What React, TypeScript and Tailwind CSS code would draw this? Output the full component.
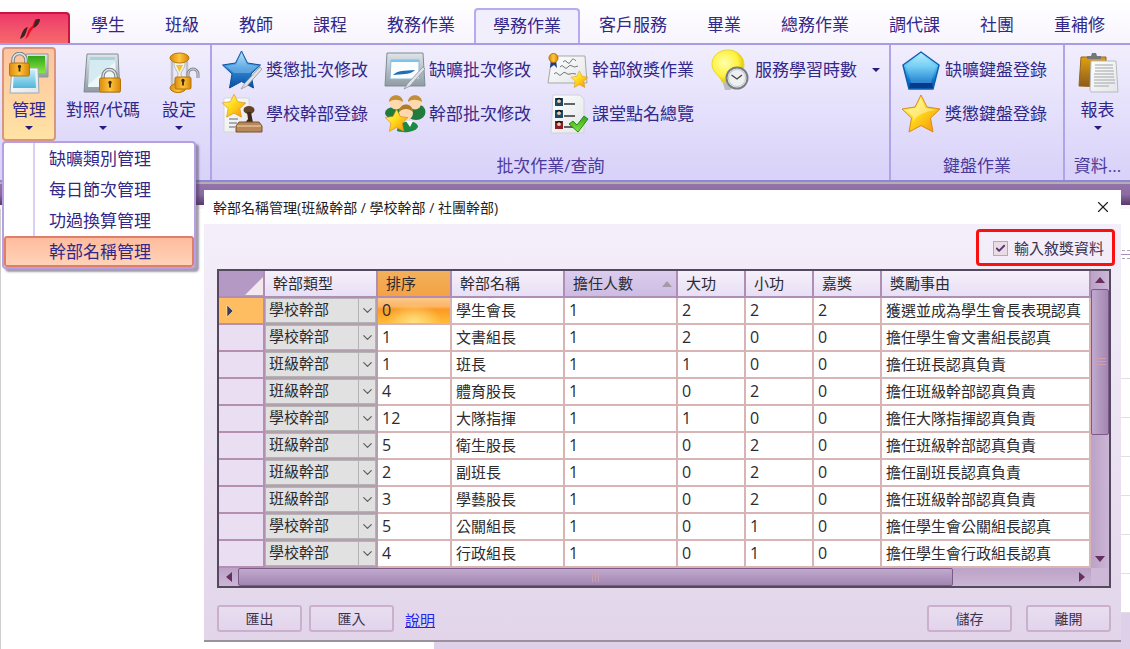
import { useState } from 'react';
import type { ReactNode } from 'react';
import clsx from 'clsx';
import { Check, ChevronDown, X } from 'lucide-react';

const STAR = 'M21 2 L27 14 L40 16 L30.5 25 L33 39 L21 32.5 L9 39 L11.5 25 L2 16 L15 14 Z';

const tabs = ['學生', '班級', '教師', '課程', '教務作業', '學務作業', '客戶服務', '畢業', '總務作業', '調代課', '社團', '重補修'];

const menuItems = ['缺曠類別管理', '每日節次管理', '功過換算管理', '幹部名稱管理'];

const columns = [
  { label: '幹部類型', width: 'w-[113px]' },
  { label: '排序', width: 'w-[74px]' },
  { label: '幹部名稱', width: 'w-[113px]' },
  { label: '擔任人數', width: 'w-[113px]' },
  { label: '大功', width: 'w-[68px]' },
  { label: '小功', width: 'w-[68px]' },
  { label: '嘉獎', width: 'w-[68px]' },
  { label: '獎勵事由', width: '' },
];

const rows = [
  { type: '學校幹部', values: ['0', '學生會長', '1', '2', '2', '2', '獲選並成為學生會長表現認真'] },
  { type: '學校幹部', values: ['1', '文書組長', '1', '2', '0', '0', '擔任學生會文書組長認真'] },
  { type: '班級幹部', values: ['1', '班長', '1', '1', '0', '0', '擔任班長認真負責'] },
  { type: '班級幹部', values: ['4', '體育股長', '1', '0', '2', '0', '擔任班級幹部認真負責'] },
  { type: '學校幹部', values: ['12', '大隊指揮', '1', '1', '0', '0', '擔任大隊指揮認真負責'] },
  { type: '班級幹部', values: ['5', '衛生股長', '1', '0', '2', '0', '擔任班級幹部認真負責'] },
  { type: '班級幹部', values: ['2', '副班長', '1', '0', '2', '0', '擔任副班長認真負責'] },
  { type: '班級幹部', values: ['3', '學藝股長', '1', '0', '2', '0', '擔任班級幹部認真負責'] },
  { type: '學校幹部', values: ['5', '公關組長', '1', '0', '1', '0', '擔任學生會公關組長認真'] },
  { type: '學校幹部', values: ['4', '行政組長', '1', '0', '1', '0', '擔任學生會行政組長認真'] },
];

// Gradients shared by all ribbon icons
const IconDefs = () => (
  <svg className="absolute h-0 w-0" aria-hidden="true">
    <defs>
      <linearGradient id="gold" x1="0" y1="0" x2="1" y2="1">
        <stop offset="0" stopColor="#fff59a" />
        <stop offset="0.45" stopColor="#ffdd1c" />
        <stop offset="1" stopColor="#f58a0a" />
      </linearGradient>
      <linearGradient id="lock" x1="0" y1="0" x2="1" y2="0">
        <stop offset="0" stopColor="#d98c10" />
        <stop offset="0.5" stopColor="#ffc53c" />
        <stop offset="1" stopColor="#d58608" />
      </linearGradient>
      <linearGradient id="blue" x1="0" y1="0" x2="0" y2="1">
        <stop offset="0" stopColor="#a9e0fb" />
        <stop offset="0.45" stopColor="#2f8fdc" />
        <stop offset="1" stopColor="#0a4c9e" />
      </linearGradient>
      <linearGradient id="gem" x1="0" y1="0" x2="0" y2="1">
        <stop offset="0" stopColor="#b6f0ff" />
        <stop offset="0.4" stopColor="#5cc4f0" />
        <stop offset="0.75" stopColor="#0a78d0" />
        <stop offset="1" stopColor="#0a4fa8" />
      </linearGradient>
      <linearGradient id="sky" x1="0" y1="0" x2="0" y2="1">
        <stop offset="0" stopColor="#c9eef8" />
        <stop offset="1" stopColor="#4fb6dc" />
      </linearGradient>
      <linearGradient id="green" x1="0" y1="0" x2="0" y2="1">
        <stop offset="0" stopColor="#2fa51c" />
        <stop offset="1" stopColor="#8ae63c" />
      </linearGradient>
      <linearGradient id="steel" x1="0" y1="0" x2="0" y2="1">
        <stop offset="0" stopColor="#dfe5e9" />
        <stop offset="1" stopColor="#8f9aa3" />
      </linearGradient>
      <linearGradient id="paper" x1="0" y1="0" x2="1" y2="1">
        <stop offset="0" stopColor="#ffffff" />
        <stop offset="1" stopColor="#e2e5e8" />
      </linearGradient>
      <linearGradient id="wood" x1="0" y1="0" x2="0" y2="1">
        <stop offset="0" stopColor="#e0a010" />
        <stop offset="1" stopColor="#8a5a1c" />
      </linearGradient>
      <radialGradient id="bulb" cx="0.4" cy="0.4" r="0.6">
        <stop offset="0" stopColor="#ffffb0" />
        <stop offset="0.7" stopColor="#fff23a" />
        <stop offset="1" stopColor="#e0c60a" />
      </radialGradient>
    </defs>
  </svg>
);

const Icon = ({ children }: { children: ReactNode }) => (
  <svg viewBox="0 0 42 42" className="size-[42px] shrink-0" fill="none" aria-hidden="true">
    {children}
  </svg>
);

const Star = ({ transform, fill = 'url(#gold)', stroke = '#d98a12' }: { transform?: string; fill?: string; stroke?: string }) => (
  <path d={STAR} transform={transform} fill={fill} stroke={stroke} strokeWidth="1" strokeLinejoin="round" />
);

const Keyhole = ({ x, y }: { x: number; y: number }) => (
  <path d={`M${x} ${y} m-1.6 -1 a1.7 1.7 0 1 1 3.2 0 l-0.7 1.3 v3.2 h-1.8 v-3.2 z`} fill="#3f2604" />
);

const ManageIcon = () => (
  <Icon>
    <path d="M18 2 H40 V25 H22 L18 22 Z" fill="url(#steel)" stroke="#8b979c" />
    <path d="M20 4 H37 V21 H20 Z" fill="url(#green)" />
    <path d="M4 16 H30 L31 41 H2 Z" fill="url(#paper)" stroke="#9ba9b2" />
    <path d="M6 18 H27 L28 36 H5 Z" fill="url(#sky)" />
    <path d="M5 13 V8 a6.500 6.500 0 0 1 13 0 V13" stroke="#7d8388" strokeWidth="3.600" />
    <path d="M5 13 V8 a6.500 6.500 0 0 1 13 0 V13" stroke="#dfe3e6" strokeWidth="1.500" />
    <rect x="1.500" y="11" width="20" height="13" rx="1.500" fill="url(#lock)" stroke="#b87408" />
    <Keyhole x={11.5} y={16} />
  </Icon>
);

const CodeIcon = () => (
  <Icon>
    <path d="M5 2 H36 L38 40 H2 Z" fill="url(#steel)" stroke="#828d95" />
    <path d="M8 5 H33 L35 35 H6 Z" fill="#d5ebf1" />
    <path d="M8 5 H33 V8 H8 Z" fill="#a9d2df" />
    <path d="M7 32 L33 10 L34 35 H6 Z" fill="#edf6f8" />
    <path d="M21 27 V24 a6 6 0 0 1 13 0 V27" stroke="#7d8388" strokeWidth="3.500" />
    <path d="M21 27 V24 a6 6 0 0 1 13 0 V27" stroke="#dfe3e6" strokeWidth="1.400" />
    <rect x="17.500" y="26" width="21" height="14" rx="1.500" fill="url(#lock)" stroke="#b87408" />
    <Keyhole x={28} y={32} />
  </Icon>
);

const SettingIcon = () => (
  <Icon>
    <path d="M14 9 V34 M29 9 V34" stroke="#bcc0c8" strokeWidth="2.500" />
    <path d="M16 10 H27 C27 18 23 19 23 22 C23 25 27 27 27 35 H16 C16 27 20 25 20 22 C20 19 16 18 16 10 Z" fill="#f5f2df" stroke="#b9b9c2" />
    <path d="M18 13 H25 L21.500 20 Z" fill="#eec136" />
    <ellipse cx="21.500" cy="6" rx="9.500" ry="5" fill="url(#lock)" stroke="#b87408" />
    <ellipse cx="20" cy="36" rx="8" ry="4.500" fill="url(#lock)" stroke="#b87408" />
    <path d="M30 28 V22 a5 5 0 0 1 10 0 V26" stroke="#81868d" strokeWidth="3" />
    <path d="M30 28 V22 a5 5 0 0 1 10 0 V26" stroke="#d9dce0" strokeWidth="1" />
    <rect x="17" y="25" width="16" height="12" rx="1.500" fill="url(#lock)" stroke="#b87408" />
    <Keyhole x={25} y={30} />
  </Icon>
);

const Pen = () => (
  <path d="M39 18 L24 34 L20 40 L26 37 L41 20 Z" fill="#dfe2e6" stroke="#8d949c" strokeWidth="0.800" />
);

const RewardIcon = () => (
  <Icon>
    <Star fill="url(#blue)" stroke="#0d4f9c" transform="translate(-0.5 0)" />
    <path d="M20.500 5 L26 15.500 L37 17 L29 24 L13 24 L5 17 L15 15.500 Z" fill="#ffffff" opacity="0.25" />
    <Pen />
  </Icon>
);

const OfficerIcon = () => (
  <Icon>
    <path d="M3 5 H28 L29 39 H3 Z" fill="url(#paper)" stroke="#d5d5d8" />
    <path d="M8 26 h9 M8 30 h8 M8 34 h6" stroke="#666" strokeWidth="1" />
    <Star transform="translate(0 0) scale(0.620)" />
    <ellipse cx="28" cy="17" rx="5.500" ry="4" fill="#634225" />
    <path d="M26 19 H30 L32 30 H24 L27 26 Z" fill="#3f2815" />
    <path d="M18 29 H38 L41 33 V39 H15 V33 Z" fill="#b98858" stroke="#765033" />
    <path d="M16 33 H40" stroke="#e4bd93" strokeWidth="1.500" />
  </Icon>
);

const AbsenceIcon = () => (
  <Icon>
    <path d="M3 4 H39 L41 37 H1 Z" fill="url(#steel)" stroke="#7f8d96" />
    <path d="M7 11 H35 V30 H6 Z" fill="#fcfdff" stroke="#8fb9d1" />
    <path d="M7 12 H35" stroke="#7cc3ef" strokeWidth="2" />
    <path d="M9 26 C14 21 20 22 31 21 C27 26 17 25 9 26 Z" fill="#1f6fb5" />
    <Pen />
  </Icon>
);

const GroupIcon = () => (
  <Icon>
    <ellipse cx="10" cy="20" rx="9" ry="6" fill="#217a3e" />
    <ellipse cx="32" cy="19" rx="9.500" ry="8" fill="#217a3e" />
    <circle cx="12" cy="10" r="6.500" fill="#ffd9ae" />
    <path d="M5 9 C5 0 19 0 19 9 C14 6 9 6 5 9 Z" fill="#c28f38" />
    <circle cx="31" cy="10" r="6.500" fill="#ffd9ae" />
    <path d="M24 9 C24 0 38 0 38 9 C33 6 28 6 24 9 Z" fill="#c28f38" />
    <path d="M13 38 C13 26 34 26 34 34 C31 40 17 40 13 38 Z" fill="#1c8a42" />
    <circle cx="22" cy="20" r="7" fill="#ffd9ae" />
    <path d="M15 19 C15 9 29 9 29 19 C25 15 19 15 15 19 Z" fill="#b07c2c" />
    <path d="M22 28 l4 6 l3 -6 z" fill="#fff" />
    <Star transform="translate(0 15) scale(0.600)" />
  </Icon>
);

const CertificateIcon = () => (
  <Icon>
    <path d="M5 7 H38 L40 34 H1 Z" fill="url(#paper)" stroke="#a6a9a2" />
    <path d="M16 13 q2 -3 4 0 t4 -1 t5 0 M13 18 q2 -3 4 0 t4 0 t4 -1 t6 0 M7 25 q2 -3 4 0 t4 0 t4 -1 t4 1 t6 0" stroke="#777" strokeWidth="1" />
    <path d="M4 11 L3 19 L7 16 L10 19 L9 11 Z" fill="#1d3f8f" />
    <circle cx="6.500" cy="9" r="4.500" fill="url(#lock)" stroke="#b87408" />
    <Star transform="translate(23 21) scale(0.450)" />
  </Icon>
);

const RollCallIcon = () => (
  <Icon>
    <path d="M6 2 H33 L37 6 V40 H4 Z" fill="url(#paper)" stroke="#cfd2d6" />
    {[5, 17, 28].map((y, i) => (
      <g key={y}>
        <rect x="8" y={y} width="8" height="8" fill={i === 2 ? '#8c1c26' : '#174a6d'} />
        <circle cx="12" cy={y + 3} r="2" fill="#f2cda8" />
        <path d={`M9.500 ${y + 2} q2.500 -3 5 0`} stroke="#111" strokeWidth="1.500" />
        <path d={`M17 ${y + 6} h11`} stroke="#333" strokeWidth="1.500" />
      </g>
    ))}
    <path d="M22 31 L26 28 L30 32 L37 23 L41 26 L31 39 Z" fill="url(#green)" stroke="#218c18" />
  </Icon>
);

const ServiceIcon = () => (
  <Icon>
    <path d="M12 31 H24 V38 L20 41 H15 Z" fill="#b9bdc2" />
    <path d="M18 1 C28 1 34 8 34 16 C34 24 27 27 26 33 H12 C11 27 2 24 2 15 C2 7 9 1 18 1 Z" fill="url(#bulb)" stroke="#e7d535" />
    <circle cx="27" cy="29" r="10.500" fill="#eef0f1" stroke="#777e83" strokeWidth="2" />
    <circle cx="27" cy="29" r="8.500" stroke="#c2c7ca" />
    <path d="M21.500 26 L27 30 L32 26" stroke="#444" strokeWidth="1.300" />
  </Icon>
);

const PentagonIcon = () => (
  <Icon>
    <path d="M21 3 L39 16 L33 40 H9 L3 16 Z" fill="url(#gem)" stroke="#0e5fae" strokeWidth="1.500" strokeLinejoin="round" />
    <path d="M21 6 L36 17 L31 34 H11 L6 17 Z" fill="#d8f6ff" opacity="0.2" />
    <path d="M10 34 H32 L33 39 H9 Z" fill="#063a8c" />
  </Icon>
);

const StarIcon = () => (
  <Icon>
    <Star />
    <path d="M20.500 5 L25.500 15 L36 17 C26 18 16 22 13 29 L13.500 24 L6 17 L16 15 Z" fill="#ffffff" opacity="0.4" />
  </Icon>
);

const ReportIcon = () => (
  <Icon>
    <path d="M4 5 H29 V35 L2 34 Z" fill="url(#wood)" stroke="#95641a" />
    <path d="M10 7 V4 H14 L15 1 H19 L20 4 H24 V7 Z" fill="#777" />
    <path d="M14 9 H39 L41 40 H14 L13 38 Z" fill="url(#paper)" stroke="#b7babd" />
    <path d="M18 13 H36 M18 16 H36 M18 19 H37 M17 22 H37 M17 25 H37 M17 28 H38 M17 31 H38 M17 34 H32" stroke="#a4a4a4" />
  </Icon>
);

const Caret = ({ className }: { className?: string }) => (
  <svg viewBox="0 0 8 4" className={clsx('h-1 w-2', className)} aria-hidden="true">
    <path d="M0 0 H8 L4 4 Z" fill="#241a80" />
  </svg>
);

const LargeButton = ({ icon, label, className }: { icon: ReactNode; label: string; className?: string }) => (
  <button type="button" className={clsx('flex h-[94px] flex-col items-center rounded-[4px] border-2 pt-[3px]', className)}>
    {icon}
    <span className="mt-1 whitespace-nowrap leading-6">{label}</span>
    <Caret className="mt-1" />
  </button>
);

const SmallButton = ({ icon, label, menu }: { icon: ReactNode; label: string; menu?: boolean }) => (
  <button type="button" className="flex h-11 items-center gap-[3px] whitespace-nowrap">
    {icon}
    <span>{label}</span>
    {menu && <Caret className="ml-3" />}
  </button>
);

const RibbonGroup = ({ label, className, children }: { label?: string; className?: string; children: ReactNode }) => (
  <section className={clsx('flex flex-col justify-between border-[#b0a3e6]', className)}>
    {children}
    <div className="h-[26px] truncate text-center leading-6 text-[#4a3a9c]">{label}</div>
  </section>
);

const DropMenu = () => (
  <ul className="absolute left-[2px] top-[96px] z-20 w-[194px] rounded-[4px] border-2 border-[#b79fe2] bg-white bg-[linear-gradient(to_right,transparent_29px,#dccff5_29px,#dccff5_31px,transparent_31px)] shadow-[3px_3px_2px_rgba(70,60,90,0.5)]">
    {menuItems.map((item) => (
      <li key={item}>
        <button
          type="button"
          className={clsx(
            'block h-[31px] w-full rounded-[3px] border-2 pl-[43px] text-left leading-[26px]',
            item === '幹部名稱管理' ? 'border-[#de7f6c] bg-linear-to-b from-[#ffbc9e] to-[#ffd3b8]' : 'border-transparent',
          )}
        >
          {item}
        </button>
      </li>
    ))}
  </ul>
);

const Ribbon = () => (
  <header className="text-[17px] text-[#322889]">
    <nav className="flex h-[45px] items-end overflow-hidden border-b-2 border-[#a99ce6] bg-linear-to-b from-white to-[#f8f5fd]">
      <button type="button" aria-label="系統選單" className="mr-px flex h-[31px] w-[70px] items-center justify-center rounded-tr-[4px] border-t-2 border-r-2 border-[#c9163c] bg-linear-to-b from-[#ef386a] to-[#f5686c]">
        <svg viewBox="0 0 22 22" className="mr-2 size-[22px]" fill="none" aria-hidden="true">
          <path d="M1 21 C3 15 4 10 9 9 C7 13 7 18 3 20 Z" fill="#3b2226" />
          <path d="M6 21 C9 16 8 12 12 9 C15 7 14 3 17 1 C18 6 15 10 12 13 C10 16 10 19 6 21 Z" fill="#e60d20" />
          <path d="M14 10 C16 7 15 3 18 1 L21 1 C21 5 18 9 14 10 Z" fill="#3b2226" />
        </svg>
      </button>
      {tabs.map((tab) => (
        <a
          key={tab}
          href="#"
          className={clsx(
            'shrink-0 whitespace-nowrap',
            tab === '學務作業'
              ? '-mx-px -mb-[2px] h-[37px] rounded-t-[4px] border-2 border-b-0 border-[#b7aaf0] bg-[#f2effd] px-[17px] leading-[32px]'
              : 'h-[35px] px-5 leading-[34px]',
          )}
        >
          {tab}
        </a>
      ))}
    </nav>

    <div className="relative flex h-[137px] border-b-2 border-[#9185cf] bg-linear-to-b from-[#f1eefd] to-[#d8d1f9]">
      <RibbonGroup className="w-[212px] shrink-0 border-r-2">
        <div className="flex gap-[5px] pl-[2px] pt-[2px]">
          <LargeButton icon={<ManageIcon />} label="管理" className="w-[54px] border-[#d9967e] bg-linear-to-b from-[#fdc4a0] to-[#ffe3a4]" />
          <LargeButton icon={<CodeIcon />} label="對照/代碼" className="w-[84px] border-transparent" />
          <LargeButton icon={<SettingIcon />} label="設定" className="w-[58px] border-transparent" />
        </div>
      </RibbonGroup>
      <RibbonGroup label="批次作業/查詢" className="flex-1 border-r-2">
        <div className="grid grid-flow-col grid-cols-[163px_163px_163px_auto] grid-rows-[44px_44px] pl-[9px] pt-[3px]">
          <SmallButton icon={<RewardIcon />} label="獎懲批次修改" />
          <SmallButton icon={<OfficerIcon />} label="學校幹部登錄" />
          <SmallButton icon={<AbsenceIcon />} label="缺曠批次修改" />
          <SmallButton icon={<GroupIcon />} label="幹部批次修改" />
          <SmallButton icon={<CertificateIcon />} label="幹部敘獎作業" />
          <SmallButton icon={<RollCallIcon />} label="課堂點名總覽" />
          <SmallButton icon={<ServiceIcon />} label="服務學習時數" menu />
        </div>
      </RibbonGroup>
      <RibbonGroup label="鍵盤作業" className="w-[174px] shrink-0 border-r-2">
        <div className="flex flex-col pl-[9px] pt-[3px]">
          <SmallButton icon={<PentagonIcon />} label="缺曠鍵盤登錄" />
          <SmallButton icon={<StarIcon />} label="獎懲鍵盤登錄" />
        </div>
      </RibbonGroup>
      <RibbonGroup label="資料..." className="w-[65px] shrink-0">
        <div className="flex justify-center pt-[2px]">
          <LargeButton icon={<ReportIcon />} label="報表" className="w-[58px] border-transparent" />
        </div>
      </RibbonGroup>
      <DropMenu />
    </div>
  </header>
);

const headCell = 'border-b-2 border-r-2 border-[#b08db4] pl-2 text-left font-normal';

const RosterTable = () => (
  <table className="w-full min-w-0 flex-1 table-fixed border-separate border-spacing-0 bg-white">
    <colgroup>
      <col className="w-[46px]" />
      {columns.map((column) => (
        <col key={column.label} className={column.width} />
      ))}
    </colgroup>
    <thead>
      <tr className="h-[27px]">
        <th aria-label="選取" className="border-b-2 border-r-2 border-[#b08db4] bg-[#b399c3] p-0">
          <svg viewBox="0 0 18 18" className="ml-auto mt-1 size-[18px]" aria-hidden="true">
            <path d="M18 0 V18 H0 Z" fill="#f3e8ee" />
          </svg>
        </th>
        {columns.map(({ label }) => (
          <th
            key={label}
            className={clsx(
              headCell,
              label === '排序' && 'bg-linear-to-b from-[#f1b05c] to-[#f5a242]',
              label === '擔任人數' && 'bg-linear-to-b from-[#dccdee] to-[#ccbce2]',
              label !== '排序' && label !== '擔任人數' && 'bg-linear-to-b from-[#f5f0fa] to-[#e8dff5]',
            )}
          >
            <div className="flex items-center justify-between pr-1">
              {label}
              {label === '擔任人數' && (
                <svg viewBox="0 0 10 6" className="h-[6px] w-[10px]" aria-hidden="true">
                  <path d="M5 0 L10 6 H0 Z" fill="#a39ba6" />
                </svg>
              )}
            </div>
          </th>
        ))}
      </tr>
    </thead>
    <tbody>
      {rows.map((row, index) => (
        <tr key={index} className="h-[27px]">
          <td className={clsx('border-b-2 border-r-2 border-[#b48fb2] p-0', index === 0 ? 'bg-[#ffbd62]' : 'bg-[#eadff2]')}>
            {index === 0 && (
              <svg viewBox="0 0 8 12" className="ml-[7px] h-3 w-2" aria-label="目前列">
                <path d="M1 0 L7 6 L1 12 Z" fill="#3d3d52" stroke="#fff" strokeWidth="0.500" />
              </svg>
            )}
          </td>
          <td className="border-b-2 border-r-2 border-[#b3a0ac] p-0">
            <div className="grid h-[25px] grid-cols-[1fr_18px] bg-[#e1e1e1]">
              <select
                aria-label={`第 ${index + 1} 列幹部類型`}
                defaultValue={row.type}
                className="col-span-2 col-start-1 row-start-1 h-[25px] appearance-none border border-[#b4b4b4] pb-[2px] pl-[3px] leading-[21px] outline-none"
              >
                <option>學校幹部</option>
                <option>班級幹部</option>
              </select>
              <span className="pointer-events-none col-start-2 row-start-1 flex items-center justify-center border-l border-[#b4b4b4]">
                <ChevronDown size={15} color="#606060" />
              </span>
            </div>
          </td>
          {row.values.map((value, column) => (
            <td
              key={column}
              className={clsx(
                'truncate border-b-2 border-r-2 border-[#d9b4b4] py-0 pl-1',
                /^\d+$/.test(value) && 'text-[16px]',
                index === 0 && column === 0 &&
                  'bg-[radial-gradient(ellipse_at_bottom,#ffe285_0%,transparent_55%),linear-gradient(to_bottom,#fcc88c_0%,#fcb463_35%,#fb9a22_45%,#ffbb38_100%)]',
              )}
            >
              {value}
            </td>
          ))}
        </tr>
      ))}
    </tbody>
  </table>
);

const Arrow = ({ d }: { d: string }) => (
  <svg viewBox="0 0 12 12" className="size-3" aria-hidden="true">
    <path d={d} fill="#653061" />
  </svg>
);

const DataGrid = () => (
  <div className="border-2 border-[#55495f] text-[15px] leading-[25px] text-[#2b2b30]">
    <div className="flex">
      <RosterTable />
      <div className="flex w-[18px] shrink-0 flex-col items-center bg-linear-to-r from-[#bba2c6] to-[#cbb6d6]">
        <span className="flex h-[18px] items-center">
          <Arrow d="M6 3 L11 9 H1 Z" />
        </span>
        <span className="flex w-full flex-[15] flex-col items-center justify-center gap-[2px] rounded-[2px] border border-[#7b5a88] bg-linear-to-r from-[#c0a9ce] to-[#a386b2]">
          <span className="h-px w-[11px] bg-[#cf9fab]" />
          <span className="h-px w-[11px] bg-[#cf9fab]" />
          <span className="h-px w-[11px] bg-[#cf9fab]" />
        </span>
        <span className="flex-[12]" />
        <span className="flex h-[18px] items-center">
          <Arrow d="M6 9 L11 3 H1 Z" />
        </span>
      </div>
    </div>
    <div className="flex h-[18px] bg-linear-to-b from-[#bba2c6] to-[#cbb6d6]">
      <span className="flex w-[19px] items-center justify-center">
        <Arrow d="M3 6 L9 1 V11 Z" />
      </span>
      <span className="flex flex-[72] items-center justify-center gap-[2px] rounded-[2px] border border-[#7b5a88] bg-linear-to-b from-[#c0a9ce] to-[#a386b2]">
        <span className="h-[10px] w-px bg-[#cf9fab]" />
        <span className="h-[10px] w-px bg-[#cf9fab]" />
        <span className="h-[10px] w-px bg-[#cf9fab]" />
      </span>
      <span className="flex-[12]" />
      <span className="flex w-[19px] items-center justify-center">
        <Arrow d="M9 6 L3 1 V11 Z" />
      </span>
      <span className="w-[18px] bg-[#cdb8d8]" />
    </div>
  </div>
);

const FormButton = ({ children }: { children: ReactNode }) => (
  <button type="button" className="h-[27px] w-[85px] rounded-[3px] border-2 border-[#cbb0ce] bg-linear-to-b from-[#e9def0] to-[#e2d4ec] text-[14px] leading-5">
    {children}
  </button>
);

const Dialog = () => {
  const [withReward, setWithReward] = useState(true);

  return (
    <section role="dialog" aria-labelledby="dialog-title" className="relative z-10 ml-[204px] mr-[9px] mt-2 border-b-2 border-[#9a919f] bg-linear-to-b from-[#f5f1fb] to-[#e2d5ea] text-[#3d3350]">
      <div className="flex h-[34px] items-center justify-between bg-white px-[9px] text-[#1d1d1f]">
        <h1 id="dialog-title" className="text-[14px]">幹部名稱管理(班級幹部 / 學校幹部 / 社團幹部)</h1>
        <button type="button" aria-label="關閉">
          <X size={18} strokeWidth={1.5} />
        </button>
      </div>
      <div className="pb-2 pl-[13px] pr-[10px]">
        <div className="flex justify-end pb-[3px] pt-[5px]">
          <label className="-mr-1 flex h-[37px] items-center gap-[6px] rounded-[4px] border-3 border-[#fb1010] pl-[14px] pr-2 pt-[2px] text-[15px]">
            <span className="grid size-[15px] place-items-center">
              <input
                type="checkbox"
                checked={withReward}
                onChange={(e) => setWithReward(e.target.checked)}
                className="col-start-1 row-start-1 size-[15px] appearance-none border border-[#bfa3c2] bg-[#ecdbe2]"
              />
              {withReward && <Check size={11} strokeWidth={4} color="#4e3a70" className="pointer-events-none col-start-1 row-start-1" />}
            </span>
            輸入敘獎資料
          </label>
        </div>
        <DataGrid />
        <div className="flex items-center pt-[17px]">
          <div className="flex gap-[7px]">
            <FormButton>匯出</FormButton>
            <FormButton>匯入</FormButton>
          </div>
          <a href="#" className="ml-[11px] mt-1 text-[15px] text-[#2424ee] underline">說明</a>
          <div className="ml-auto flex gap-[14px]">
            <FormButton>儲存</FormButton>
            <FormButton>離開</FormButton>
          </div>
        </div>
      </div>
    </section>
  );
};

// Main window that shows around the edges of the dialog
const Backdrop = () => (
  <div className="absolute inset-0 flex flex-col" aria-hidden="true">
    <div className="h-[23px] border-t-2 border-[#b3aeb6] bg-linear-to-b from-[#9273aa] via-[#8b6ba2] to-[#553a6c]" />
    <div className="flex flex-1 justify-between border-t-4 border-[#f7f7f7]">
      <div className="w-[434px] border-l border-[#cfcfcf]" />
      <div className="flex flex-1 flex-col">
        <div className="mt-[41px] h-[5px] border-b border-t border-t-[#aaa2ae] border-b-[#a98fbd] [border-top-style:dashed]" />
        <div className="h-1 border-b border-dashed border-[#aaa2ae]" />
        <div className="h-[120px] border-b border-[#e2dfe4]" />
        {[0, 1, 2, 3, 4, 5].map((line) => (
          <div key={line} className="h-[39px] border-b border-[#e2dfe4]" />
        ))}
        <div className="flex-1 bg-[#dfd0ea]" />
      </div>
    </div>
  </div>
);

function App() {
  return (
    <div className="flex min-h-screen flex-col overflow-hidden bg-white font-['Open_Sans','Noto_Sans_CJK_TC',sans-serif]">
      <IconDefs />
      <Ribbon />
      <main className="relative flex-1">
        <Backdrop />
        <Dialog />
      </main>
    </div>
  );
}

export default App;
